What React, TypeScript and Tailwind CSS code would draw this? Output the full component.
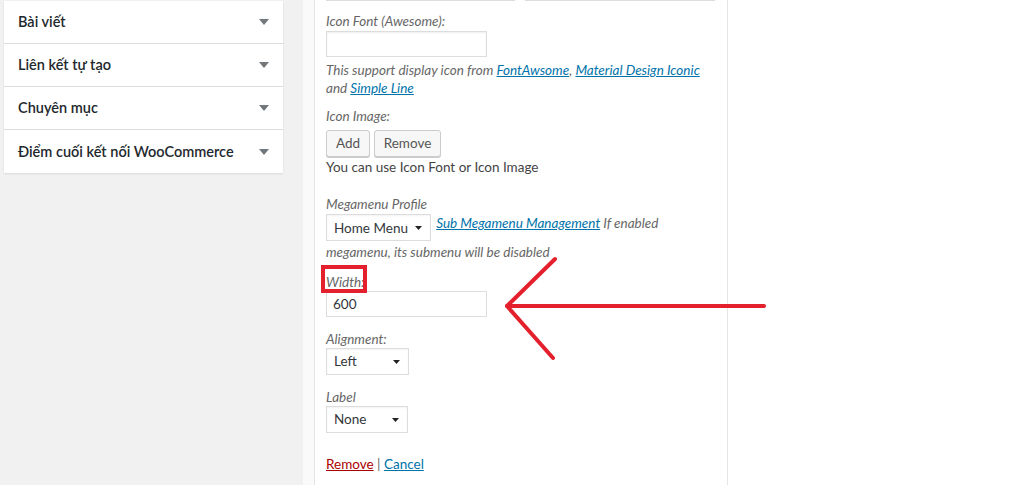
import React from 'react'

const SECTIONS = ['Bài viết', 'Liên kết tự tạo', 'Chuyên mục', 'Điểm cuối kết nối WooCommerce']

function Caret({ className = '' }: { className?: string }) {
  return (
    <svg viewBox="0 0 10 6" className={className} fill="currentColor">
      <path d="M0 0h10L5 6z" />
    </svg>
  )
}

function Select({ value, width, className = '' }: { value: string; width: string; className?: string }) {
  return (
    <span
      className={`inline-flex items-center justify-between h-[27px] border border-[#ddd] bg-white pl-[7px] pr-[8px] text-[13.5px] not-italic text-[#32373c] shadow-[inset_0_1px_2px_rgba(0,0,0,0.05)] align-top ${width} ${className}`}
    >
      <span>{value}</span>
      <Caret className="ml-[6px] w-[7px] h-[6px] shrink-0 text-[#222]" />
    </span>
  )
}

function Label({ children, className = '' }: { children: React.ReactNode; className?: string }) {
  return <div className={`italic text-[#666] leading-[18px] ${className}`}>{children}</div>
}

export default function App() {
  return (
    <div
      className="relative flex h-[485px] w-[1015px] overflow-hidden bg-white text-[13.5px]"
      style={{ fontFamily: 'Lato, "Open Sans", sans-serif' }}
    >
      {/* sidebar accordion */}
      <div className="w-[303px] shrink-0 bg-[#f1f1f1] pl-[4px]">
        <div className="mt-[1px] w-[279px] bg-white shadow-[0_1px_2px_rgba(0,0,0,0.1)]">
          {SECTIONS.map((s, i) => (
            <div
              key={s}
              className={`flex h-[43px] items-center justify-between pl-[14px] pr-[14px] ${
                i < SECTIONS.length - 1 ? 'border-b border-[#ddd]' : ''
              }`}
            >
              <span className="text-[14.5px] font-semibold text-[#23282d]">{s}</span>
              <Caret className="w-[10px] h-[6px] text-[#72777c]" />
            </div>
          ))}
        </div>
      </div>

      <div className="w-[11px] shrink-0 bg-[#fafafa]" />

      {/* menu item settings */}
      <div className="w-[414px] shrink-0 border-x border-[#e5e5e5] bg-white pl-[11px] pr-[10px]">
        <div className="-mt-[25px] flex gap-[10px]">
          <div className="h-[26px] w-[189px] border border-[#ddd]" />
          <div className="h-[26px] w-[190px] border border-[#ddd]" />
        </div>

        <Label className="mt-[11px]">Icon Font (Awesome):</Label>
        <div className="mt-[1px] h-[26px] w-[161px] border border-[#ddd] shadow-[inset_0_1px_2px_rgba(0,0,0,0.07)]" />
        <div className="mt-[4px] italic text-[#666] leading-[18px]">
          This support display icon from{' '}
          <a className="text-[#0073aa] underline">FontAwsome</a>,{' '}
          <a className="text-[#0073aa] underline">Material Design Iconic</a>
          <br />
          and <a className="text-[#0073aa] underline">Simple Line</a>
        </div>

        <Label className="mt-[10px]">Icon Image:</Label>
        <div className="mt-[5px] flex gap-[4px]">
          <button className="h-[27px] w-[44px] rounded-[3px] border border-[#ccc] bg-[#f7f7f7] text-[13.5px] text-[#555] shadow-[0_1px_0_#ccc]">
            Add
          </button>
          <button className="h-[27px] w-[67px] rounded-[3px] border border-[#ccc] bg-[#f7f7f7] text-[13.5px] text-[#555] shadow-[0_1px_0_#ccc]">
            Remove
          </button>
        </div>
        <div className="mt-[1px] leading-[18px] text-[#444]">You can use Icon Font or Icon Image</div>

        <Label className="mt-[19px]">Megamenu Profile</Label>
        <div className="mt-[1px] leading-[18px] italic text-[#666]">
          <Select value="Home Menu" width="w-[105px]" className="mb-[2px]" />{' '}
          <a className="ml-[2px] text-[#0073aa] underline">Sub Megamenu Management</a> If enabled megamenu, its
          submenu will be disabled
        </div>

        <Label className="mt-[12px]">Width:</Label>
        <div className="mt-0 flex h-[26px] w-[161px] items-center border border-[#ddd] pl-[6px] text-[13.5px] text-[#32373c]">
          600
        </div>

        <Label className="mt-[13px]">Alignment:</Label>
        <div>
          <Select value="Left" width="w-[83px]" />
        </div>

        <Label className="mt-[13px]">Label</Label>
        <div>
          <Select value="None" width="w-[82px]" />
        </div>

        <div className="mt-[22px] leading-[18px] text-[#666]">
          <a className="text-[#a00] underline">Remove</a> | <a className="text-[#0073aa] underline">Cancel</a>
        </div>
      </div>

      <div className="flex-1 bg-white" />

      {/* red annotation */}
      <div className="pointer-events-none absolute left-[321px] top-[265px] h-[28px] w-[46px] border-[4px] border-[#e3202c]" />
      <svg className="pointer-events-none absolute left-0 top-0" width="1015" height="485">
        <g stroke="#e3202c" strokeWidth="4" strokeLinecap="round" strokeLinejoin="round" fill="none">
          <path d="M764 306H507" />
          <path d="M555 259L507 306L553 358" />
        </g>
      </svg>
    </div>
  )
}
